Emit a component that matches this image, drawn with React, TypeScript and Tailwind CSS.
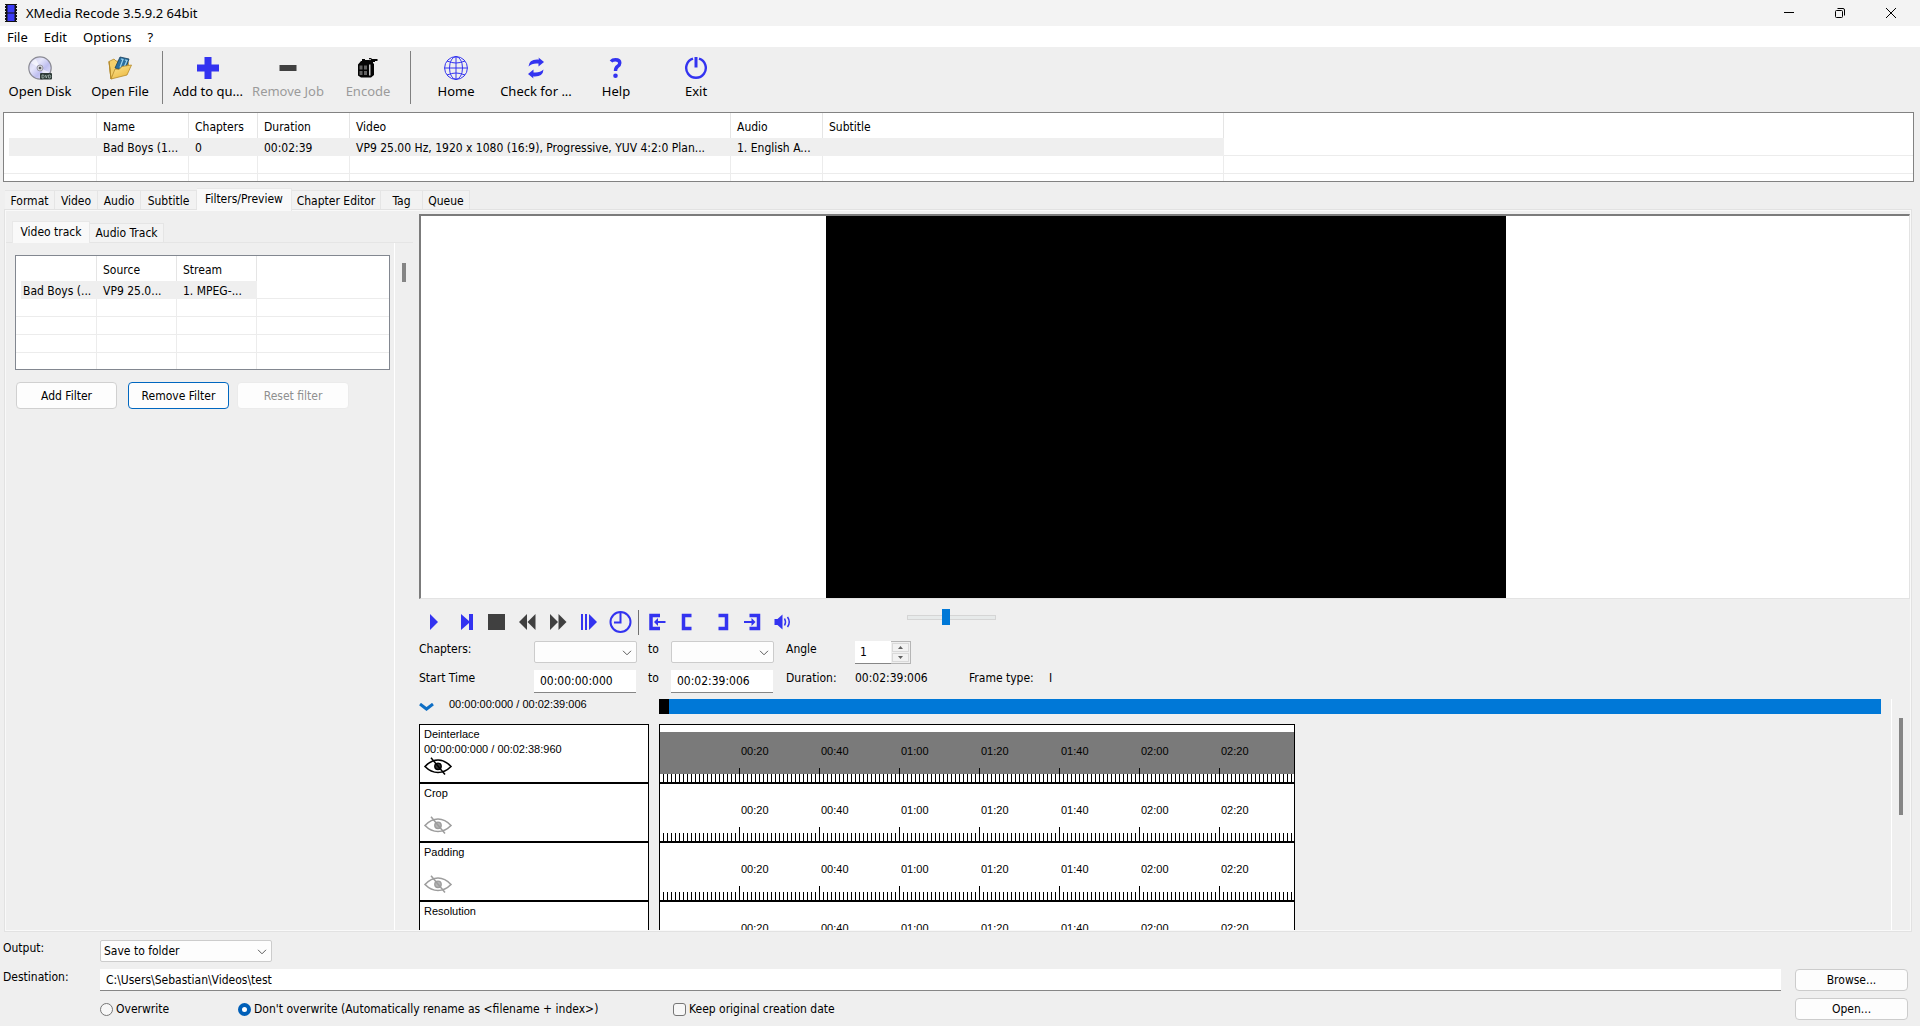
import { useState } from 'react';
import type { ReactNode } from 'react';
import clsx from 'clsx';

const BLUE = '#3333f0';
const DARK = '#404040';

/* ---------- icons ---------- */

function FilmIcon() {
  return (
    <svg width="12" height="18" viewBox="0 0 12 18" aria-hidden="true">
      <rect width="12" height="18" fill="#111" />
      <rect x="2.5" y="1" width="7" height="7.5" fill="#3a3af5" />
      <rect x="2.5" y="9.5" width="7" height="7.5" fill="#3a3af5" />
      {[1, 4, 7, 10, 13, 16].map((y) => (
        <g key={y} fill="#ddd">
          <rect x="0" y={y} width="1" height="1" />
          <rect x="11" y={y} width="1" height="1" />
        </g>
      ))}
    </svg>
  );
}

function DiscIcon() {
  return (
    <svg width="24" height="24" viewBox="0 0 24 24" aria-hidden="true">
      <defs>
        <linearGradient id="disc" x1="0" y1="0" x2="1" y2="1">
          <stop offset="0" stopColor="#c4c4e6" />
          <stop offset="0.35" stopColor="#e6e6fb" />
          <stop offset="0.6" stopColor="#bfbff0" />
          <stop offset="1" stopColor="#f2f2ff" />
        </linearGradient>
      </defs>
      <circle cx="12" cy="12" r="11.2" fill="url(#disc)" stroke="#8b8b94" strokeWidth="1.2" />
      <path d="M12 12 3 7a10 10 0 0 1 5-4zM12 12l9 4a10 10 0 0 1-4 5z" fill="#fff" opacity="0.6" />
      <circle cx="12" cy="12" r="3" fill="#d6d6dc" stroke="#9a9aa5" />
      <circle cx="12" cy="12" r="1.3" fill="#555" />
      <rect x="12" y="17" width="12" height="6.5" rx="1" fill="#2e3b38" />
      <path d="M14 19v3h1.2q1-.2 1-1.5t-1-1.5zM17.3 19l1 3 1-3M20.6 19v3h1.2q.9-.2.9-1.5t-.9-1.5z" fill="none" stroke="#b9cbc4" strokeWidth="0.7" />
    </svg>
  );
}

function FolderIcon() {
  return (
    <svg width="24" height="24" viewBox="0 0 24 24" aria-hidden="true">
      <defs>
        <linearGradient id="folder" x1="0" y1="0" x2="0.6" y2="1">
          <stop offset="0" stopColor="#fff0a8" />
          <stop offset="1" stopColor="#eebc45" />
        </linearGradient>
      </defs>
      <path d="M1 5.5 6 3l2 2 12 1 1 5-18 12z" fill="#f3cf6a" stroke="#b58a2a" strokeWidth="0.8" />
      <path d="m12 1 9 2-4 12-10-3z" fill="#2b6f9e" stroke="#143c5a" strokeWidth="0.8" />
      <path d="m13 3 2 .5-3 8M17 4l2 .5-3 7" fill="none" stroke="#9fd6f2" strokeWidth="1.2" />
      <path d="M1 5.5 3 23l4-10 4 .5 3-3L23.5 9 19 19 3 23z" fill="url(#folder)" stroke="#b58a2a" strokeWidth="0.8" />
    </svg>
  );
}

function PlusIcon() {
  return (
    <svg width="24" height="24" viewBox="0 0 24 24" fill={BLUE} aria-hidden="true">
      <path d="M8.5 1h7v7.500h7.500v7h-7.500V23h-7v-7.500H1v-7h7.500z" />
    </svg>
  );
}

function MinusIcon() {
  return (
    <svg width="24" height="24" viewBox="0 0 24 24" fill={DARK} aria-hidden="true">
      <rect x="3.500" y="9" width="17" height="6" />
    </svg>
  );
}

function EncodeIcon() {
  return (
    <svg width="24" height="24" viewBox="0 0 24 24" aria-hidden="true">
      <path d="M2 8.500 5 5h1V3h3v1h4V2h2l1 1h5.500v2H19v1h-2v1l1 1v11l-3 2.500H5L2 19.500z" fill="#050505" />
      <path d="M3.500 9.500h3v4h-3zM8 9.500h3v4H8zM3.500 15h3v4h-3zM8 15h3v4H8z" fill="#626262" />
      <path d="M13 8.500h1.500v11H13z" fill="#c8c8c8" />
      <circle cx="14" cy="3.500" r="0.800" fill="#efefef" />
    </svg>
  );
}

function HomeIcon() {
  return (
    <svg width="24" height="24" viewBox="0 0 24 24" fill="none" stroke={BLUE} strokeWidth="1" aria-hidden="true">
      <circle cx="12" cy="12" r="11.400" />
      <ellipse cx="12" cy="12" rx="6.500" ry="11.400" />
      <path d="M12 .5v23M.5 12h23M3 5q9 4 18 0M3 19q9-4 18 0" />
    </svg>
  );
}

function RefreshIcon() {
  return (
    <svg width="24" height="24" viewBox="0 0 24 24" fill={BLUE} aria-hidden="true">
      <path d="M4.500 10.500q.5-7 8.500-7h2L14.500 1.500 20 6l-5.500 4.500v-3h-2Q7.500 7.500 4.500 10.500z" />
      <path d="M19.500 13.500q-.5 7-8.500 7H9l.5 2L4 18l5.500-4.500v3h2q5 0 8-3z" />
    </svg>
  );
}

function HelpIcon() {
  return (
    <svg width="24" height="24" viewBox="0 0 24 24" fill="none" stroke={BLUE} aria-hidden="true">
      <path d="M7 5.500Q8.500 3.700 11.500 3.700q4.300 0 4.300 3.300 0 2-2.300 3.500-2 1.400-2 4.500" strokeWidth="3.400" />
      <circle cx="11.500" cy="19.800" r="1.200" strokeWidth="2.200" />
    </svg>
  );
}

function PowerIcon() {
  return (
    <svg width="24" height="24" viewBox="0 0 24 24" fill="none" stroke={BLUE} strokeWidth="2.400" aria-hidden="true">
      <path d="M9 2.600a9.800 9.800 0 1 0 6 0" />
      <path d="M12 1v10.500" strokeWidth="3" />
    </svg>
  );
}

function EyeOffIcon({ active }: { active: boolean }) {
  return (
    <svg width="28" height="18" viewBox="0 0 28 18" fill="none" stroke={active ? '#000' : '#9d9d9d'} aria-hidden="true">
      <path d="M1 9.500Q7 3 14 3t13 6.500Q21 15.500 14 15.500T1 9.500z" strokeWidth="1.600" />
      <circle cx="14" cy="9.300" r="3.200" fill={active ? '#333' : '#b5b5b5'} strokeWidth="1.400" />
      <path d="M7 .8 21 17.500" strokeWidth="1.500" />
    </svg>
  );
}

function Chevron({ className }: { className?: string }) {
  return (
    <svg width="10" height="6" viewBox="0 0 10 6" fill="none" stroke="#5c5c5c" className={className} aria-hidden="true">
      <path d="m1 .8 4 4 4-4" />
    </svg>
  );
}

const PLAYER_ICONS: Record<string, ReactNode> = {
  Play: <path d="M7 4v16l8-8z" fill={BLUE} />,
  Next: <path d="M7 4v16l8-7V20h4V4h-4v7z" fill={BLUE} />,
  Stop: <rect x="3" y="4" width="17" height="16" fill={DARK} />,
  Rewind: <path d="M11 4v16l-8-8zM19.500 4v16l-8-8z" fill={DARK} />,
  Forward: <path d="M3 4v16l8-8zM11.500 4v16l8-8z" fill={DARK} />,
  'Frame step': <path d="M3 4h2v16H3zM7 4h2v16H7zM11 4v16l8-8z" fill={BLUE} />,
  Time: (
    <g fill="none" stroke={BLUE} strokeWidth="2">
      <circle cx="11.500" cy="12" r="10" />
      <path d="M11.500 3v9.500H5" />
    </g>
  ),
  'Go to start': (
    <g fill="none" stroke={BLUE}>
      <path d="M15 5.500H6v13h9" strokeWidth="3.500" />
      <path d="M20.500 12H11" strokeWidth="2" />
      <path d="m13 8-4 4 4 4z" fill={BLUE} stroke="none" />
    </g>
  ),
  'Mark start': <path d="M15.500 5.500H7.500v13h8" fill="none" stroke={BLUE} strokeWidth="3.500" />,
  'Mark end': <path d="M11.500 5.500h8v13h-8" fill="none" stroke={BLUE} strokeWidth="3.500" />,
  'Go to end': (
    <g fill="none" stroke={BLUE}>
      <path d="M11.500 5.500h9v13h-9" strokeWidth="3.500" />
      <path d="M6 12h9" strokeWidth="2" />
      <path d="m13.500 8 4 4-4 4z" fill={BLUE} stroke="none" />
    </g>
  ),
  Volume: (
    <g>
      <path d="M5.500 9h3l5-4.500v15L8.500 15h-3z" fill={BLUE} />
      <path d="M15.500 8.500q2 3.500 0 7M18.500 7q3.500 5 0 10" fill="none" stroke={BLUE} strokeWidth="1.500" />
    </g>
  ),
};

/* ---------- data ---------- */

const JOB_COLUMNS = [
  { title: '', value: '', width: 93 },
  { title: 'Name', value: 'Bad Boys (1...', width: 92 },
  { title: 'Chapters', value: '0', width: 69 },
  { title: 'Duration', value: '00:02:39', width: 92 },
  { title: 'Video', value: 'VP9 25.00 Hz, 1920 x 1080 (16:9), Progressive, YUV 4:2:0 Plan...', width: 381 },
  { title: 'Audio', value: '1. English A...', width: 92 },
  { title: 'Subtitle', value: '', width: 401 },
];

const SOURCE_COLUMNS = [
  { title: '', value: 'Bad Boys (...', width: 81 },
  { title: 'Source', value: 'VP9 25.0...', width: 80 },
  { title: 'Stream', value: '1. MPEG-...', width: 80 },
];

const TABS = [
  { name: 'Format', width: 'w-[50px]' },
  { name: 'Video', width: 'w-[43px]' },
  { name: 'Audio', width: 'w-[43px]' },
  { name: 'Subtitle', width: 'w-[56px]' },
  { name: 'Filters/Preview', width: 'w-[95px]' },
  { name: 'Chapter Editor', width: 'w-[89px]' },
  { name: 'Tag', width: 'w-[42px]' },
  { name: 'Queue', width: 'w-[47px]' },
];

const TRACKS = [
  { name: 'Deinterlace', range: '00:00:00:000 / 00:02:38:960', active: true },
  { name: 'Crop', range: '', active: false },
  { name: 'Padding', range: '', active: false },
  { name: 'Resolution', range: '', active: false },
];

const TIMES = ['00:20', '00:40', '01:00', '01:20', '01:40', '02:00', '02:20'];
const TICKS = Array.from({ length: 158 }, (_, i) => i + 1);

/* ---------- parts ---------- */

function ToolButton({ icon, label, disabled }: { icon: ReactNode; label: string; disabled?: boolean }) {
  return (
    <button type="button" disabled={disabled} className="flex w-20 shrink-0 flex-col items-center gap-[3px] whitespace-nowrap pt-[9px] disabled:text-[#9b9b9b]">
      {icon}
      <span className="leading-4">{label}</span>
    </button>
  );
}

function ListTable({ columns, emptyRows }: { columns: typeof JOB_COLUMNS; emptyRows: number }) {
  return (
    <table className="w-full table-fixed border-separate border-spacing-0 text-left">
      <colgroup>
        {columns.map((c, i) => (
          <col key={i} style={{ width: c.width }} />
        ))}
        <col />
      </colgroup>
      <thead>
        <tr className="h-[25px]">
          {columns.map((c, i) => (
            <th key={i} className="border-r border-[#e5e5e5] px-[6px] pt-[2px] font-normal leading-4">{c.title}</th>
          ))}
          <th />
        </tr>
      </thead>
      <tbody>
        <tr className="h-[18px]">
          {columns.map((c, i) => (
            <td
              key={i}
              className={clsx('overflow-hidden whitespace-nowrap bg-[#efefef] pt-px leading-4', i === 0 ? 'border-l-[5px] border-white pl-[2px]' : 'px-[6px]')}
            >
              {c.value}
            </td>
          ))}
          <td className="border-b border-[#ececec]" />
        </tr>
        {Array.from({ length: emptyRows }, (_, r) => (
          <tr key={r} className="h-[18px]">
            {columns.map((_c, i) => (
              <td key={i} className="border-b border-r border-[#ececec]" />
            ))}
            <td className="border-b border-[#ececec]" />
          </tr>
        ))}
        <tr className="h-[18px]">
          {columns.map((_c, i) => (
            <td key={i} className="border-r border-[#ececec]" />
          ))}
          <td />
        </tr>
      </tbody>
    </table>
  );
}

function Select({ label, options, className }: { label: string; options: string[]; className?: string }) {
  return (
    <div className={clsx('relative', className)}>
      <select aria-label={label} className="block h-[22px] w-full appearance-none rounded-xs border border-[#cccccc] bg-[#fdfdfd] pl-[3px] leading-4">
        {options.map((o) => (
          <option key={o}>{o}</option>
        ))}
      </select>
      <Chevron className="pointer-events-none absolute right-[5px] top-[9px]" />
    </div>
  );
}

function PlayerButton({ name }: { name: string }) {
  return (
    <button type="button" aria-label={name} className="flex w-[31px] shrink-0 justify-center">
      <svg width="24" height="24" viewBox="0 0 24 24" aria-hidden="true">{PLAYER_ICONS[name]}</svg>
    </button>
  );
}

function Ruler() {
  return (
    <svg className="relative -mt-[6px] block h-[14px] w-full" aria-hidden="true">
      {TICKS.map((t) => (
        <rect key={t} x={t * 4 - 1} y={t % 20 === 0 ? 0 : 6} width="1" height="14" fill="#000" />
      ))}
    </svg>
  );
}

function TrackRow({ track }: { track: (typeof TRACKS)[number] }) {
  return (
    <>
      <div className="h-[59px] border border-black bg-white px-1 pt-[2px] leading-[15px]">
        <div>{track.name}</div>
        <div className="h-[15px]">{track.range}</div>
        <button type="button" aria-label={`Toggle ${track.name}`} className="block">
          <EyeOffIcon active={track.active} />
        </button>
      </div>
      <div className="h-[59px] w-[636px] overflow-hidden border border-black bg-white pt-[7px]">
        <div className={clsx('flex h-[42px] overflow-hidden pl-[81px] pt-[11px] leading-4', track.active && 'bg-[#7a7a7a]')}>
          {TIMES.map((t) => (
            <span key={t} className="w-20 shrink-0">{t}</span>
          ))}
        </div>
        <Ruler />
      </div>
    </>
  );
}

function FilterSidebar() {
  const button = 'h-[27px] rounded border bg-[#fdfdfd] leading-4';
  return (
    <aside className="flex w-[413px] shrink-0 flex-col pt-[10px]">
      <div className="mr-[6px] flex items-end border-b border-[#e5e5e5] pl-[6px]">
        <button type="button" className="-mb-px h-[22px] w-[78px] border border-b-0 border-[#e8e8e8] bg-[#f9f9f9] pb-[2px] leading-4">Video track</button>
        <button type="button" className="h-[19px] w-[74px] border border-b-0 border-l-0 border-[#e5e5e5] bg-[#f3f3f3] leading-4">Audio Track</button>
      </div>
      <div className="flex flex-1">
        <div className="w-[389px] border-r border-white pl-[9px] pt-3">
          <div className="h-[115px] w-[375px] overflow-hidden border border-[#828790] bg-white">
            <ListTable columns={SOURCE_COLUMNS} emptyRows={3} />
          </div>
          <div className="mt-3 flex pl-px">
            <button type="button" className={clsx(button, 'mr-[11px] w-[101px] border-[#d0d0d0]')}>Add Filter</button>
            <button type="button" className={clsx(button, 'mr-2 w-[101px] border-[#0067c0]')}>Remove Filter</button>
            <button type="button" disabled className={clsx(button, 'w-28 border-[#ebebeb] bg-[#f6f6f6] text-[#8f8f8f]')}>Reset filter</button>
          </div>
        </div>
        <div className="mt-5 ml-[7px] h-[19px] w-1 bg-[#858585]" />
      </div>
    </aside>
  );
}

function PlayerPanel() {
  const field = 'h-[23px] w-[102px] border-b border-[#868686] bg-white px-[6px] leading-4';
  return (
    <section className="flex min-w-0 flex-1 flex-col pt-[3px]">
      <div className="flex h-[385px] shrink-0 justify-center border-2 border-b border-r border-[#e3e3e3] border-t-[#7b7b7b] border-l-[#7b7b7b] bg-white pl-[2px]">
        <div className="aspect-video h-full bg-black" />
      </div>

      <div className="flex h-[42px] items-center pt-1">
        {['Play', 'Next', 'Stop', 'Rewind', 'Forward', 'Frame step', 'Time'].map((n) => (
          <PlayerButton key={n} name={n} />
        ))}
        <div className="mx-[2px] h-[25px] w-px bg-[#707070]" />
        {['Go to start', 'Mark start', 'Mark end', 'Go to end', 'Volume'].map((n) => (
          <PlayerButton key={n} name={n} />
        ))}
        <input
          type="range"
          aria-label="Volume level"
          defaultValue={43}
          className="mt-[6px] ml-[111px] h-4 w-[89px] appearance-none self-start bg-transparent [&::-webkit-slider-runnable-track]:h-[5px] [&::-webkit-slider-runnable-track]:border [&::-webkit-slider-runnable-track]:border-[#d5d5d5] [&::-webkit-slider-runnable-track]:bg-[#e7eaea] [&::-webkit-slider-thumb]:-mt-[7px] [&::-webkit-slider-thumb]:h-4 [&::-webkit-slider-thumb]:w-2 [&::-webkit-slider-thumb]:appearance-none [&::-webkit-slider-thumb]:bg-[#0078d7]"
        />
      </div>

      <div className="grid grid-cols-[115px_114px_23px_115px_69px_114px_80px_auto] items-start gap-y-[6px] leading-4">
        <span>Chapters:</span>
        <Select label="First chapter" options={['']} className="w-[103px]" />
        <span>to</span>
        <Select label="Last chapter" options={['']} className="w-[103px]" />
        <label htmlFor="angle">Angle</label>
        <div className="flex h-[23px] w-14">
          <input id="angle" defaultValue="1" className="w-9 border-b border-[#868686] bg-white pl-[5px]" />
          <div className="flex w-5 flex-col gap-px border border-l-0 border-[#b5b5b5] p-px">
            <button type="button" aria-label="Increase angle" className="flex flex-1 items-center justify-center border border-[#d9d9d9] bg-[#f2f2f2]">
              <svg width="5" height="3" viewBox="0 0 5 3" aria-hidden="true"><path d="M0 3 2.500 0 5 3z" fill="#606060" /></svg>
            </button>
            <button type="button" aria-label="Decrease angle" className="flex flex-1 items-center justify-center border border-[#d9d9d9] bg-[#f2f2f2]">
              <svg width="5" height="3" viewBox="0 0 5 3" aria-hidden="true"><path d="M0 0h5L2.500 3z" fill="#606060" /></svg>
            </button>
          </div>
        </div>
        <span />
        <span />

        <label htmlFor="start">Start Time</label>
        <input id="start" defaultValue="00:00:00:000" className={field} />
        <label htmlFor="end">to</label>
        <input id="end" defaultValue="00:02:39:006" className={field} />
        <span>Duration:</span>
        <span>00:02:39:006</span>
        <span>Frame type:</span>
        <span>I</span>
      </div>

      <div className="mt-[6px] flex min-h-0 flex-1 font-['Liberation_Sans',Arial,sans-serif] text-[11px]">
        <div className="min-w-0 flex-1 overflow-hidden pr-[10px]">
          <div className="grid grid-cols-[230px_1fr] gap-x-[10px]">
            <div className="flex h-[25px] items-start leading-[11px]">
              <button type="button" aria-label="Collapse tracks" className="mt-1 mr-[15px]">
                <svg width="15" height="8" viewBox="0 0 15 8" fill="none" stroke="#0f6fc5" strokeWidth="3" aria-hidden="true">
                  <path d="m1 1 6.500 5L14 1" />
                </svg>
              </button>
              {'00:00:00:000 / 00:02:39:006'}
            </div>
            <div className="h-[15px] bg-[#0078d7]">
              <div className="h-full w-[10px] bg-black" />
            </div>
            {TRACKS.map((t) => (
              <TrackRow key={t.name} track={t} />
            ))}
          </div>
        </div>
        <div className="w-[19px] border-l border-white pl-[7px] pt-[19px]">
          <div className="h-[97px] w-1 bg-[#858585]" />
        </div>
      </div>
    </section>
  );
}

function OutputForm() {
  const button = 'h-[22px] w-[113px] shrink-0 rounded border border-[#cccccc] bg-[#fdfdfd] leading-4';
  const [overwrite, setOverwrite] = useState(false);
  const radio = 'h-[13px] w-[13px] shrink-0 appearance-none rounded-full border border-[#767676] bg-[#f7f7f7] checked:border-4 checked:border-[#005fb8] checked:bg-white';
  return (
    <form className="flex flex-col gap-[7px] pt-2 pr-3 pb-[6px] pl-[3px]">
      <div className="flex h-[22px] items-start leading-4">
        <span className="w-[97px] shrink-0">Output:</span>
        <Select label="Output" options={['Save to folder']} className="w-[172px]" />
      </div>
      <div className="flex h-[22px] items-start leading-4">
        <label htmlFor="destination" className="w-[97px] shrink-0">Destination:</label>
        <input id="destination" defaultValue="C:\Users\Sebastian\Videos\test" className="mr-[14px] h-[22px] min-w-0 flex-1 border-b border-[#868686] bg-white px-[6px]" />
        <button type="button" className={button}>Browse...</button>
      </div>
      <div className="flex h-[22px] items-center pl-[97px] leading-4">
        <label className="flex w-[138px] items-center gap-[3px]">
          <input type="radio" name="mode" className={radio} checked={overwrite} onChange={() => setOverwrite(true)} />
          Overwrite
        </label>
        <label className="flex w-[435px] items-center gap-[3px]">
          <input type="radio" name="mode" className={radio} checked={!overwrite} onChange={() => setOverwrite(false)} />
          {"Don't overwrite (Automatically rename as <filename + index>)"}
        </label>
        <label className="flex flex-1 items-center gap-[3px]">
          <input type="checkbox" className="h-[13px] w-[13px] appearance-none rounded-[3px] border border-[#767676] bg-[#f7f7f7] checked:bg-[#005fb8]" />
          Keep original creation date
        </label>
        <button type="button" className={button}>Open...</button>
      </div>
    </form>
  );
}

export default function App() {
  const [tab, setTab] = useState('Filters/Preview');

  return (
    <div className="flex h-screen flex-col overflow-hidden bg-[#efefef] font-['DejaVu_Sans_Condensed','DejaVu_Sans',sans-serif] text-xs text-black">
      <header className="font-['Noto_Sans',sans-serif] text-[13px]">
        <div className="flex h-[26px] items-center bg-[#f3f3f3] pl-[5px] pr-1">
          <FilmIcon />
          <h1 className="ml-[9px] flex-1 leading-4">XMedia Recode 3.5.9.2 64bit</h1>
          <button type="button" aria-label="Minimize" className="flex w-[51px] justify-center">
            <svg width="10" height="10" viewBox="0 0 10 10" aria-hidden="true"><path d="M0 4h10v1H0z" /></svg>
          </button>
          <button type="button" aria-label="Restore" className="flex w-[51px] justify-center">
            <svg width="10" height="10" viewBox="0 0 10 10" fill="none" stroke="#000" aria-hidden="true">
              <rect x="0.500" y="2.500" width="7" height="7" rx="1" />
              <path d="M2.500.5H8q1.500 0 1.500 1.500v5.500" />
            </svg>
          </button>
          <button type="button" aria-label="Close" className="flex w-[51px] justify-center">
            <svg width="10" height="10" viewBox="0 0 10 10" stroke="#000" aria-hidden="true"><path d="m0 0 10 10M10 0 0 10" /></svg>
          </button>
        </div>
        <nav className="flex h-[21px] items-center gap-4 bg-white pl-[7px] leading-4">
          <button type="button">File</button>
          <button type="button">Edit</button>
          <button type="button">Options</button>
          <button type="button">?</button>
        </nav>
        <div className="flex h-[65px] items-start">
          <ToolButton icon={<DiscIcon />} label="Open Disk" />
          <ToolButton icon={<FolderIcon />} label="Open File" />
          <div className="mt-1 mr-[5px] ml-[2px] h-[53px] w-px bg-[#808080]" />
          <ToolButton icon={<PlusIcon />} label="Add to qu..." />
          <ToolButton icon={<MinusIcon />} label="Remove Job" disabled />
          <ToolButton icon={<EncodeIcon />} label="Encode" disabled />
          <div className="mt-1 mr-[5px] ml-[2px] h-[53px] w-px bg-[#808080]" />
          <ToolButton icon={<HomeIcon />} label="Home" />
          <ToolButton icon={<RefreshIcon />} label="Check for ..." />
          <ToolButton icon={<HelpIcon />} label="Help" />
          <ToolButton icon={<PowerIcon />} label="Exit" />
        </div>
      </header>

      <div className="mr-[6px] ml-[3px] h-[70px] shrink-0 overflow-hidden border border-[#828282] bg-white">
        <ListTable columns={JOB_COLUMNS} emptyRows={1} />
      </div>

      <div className="mt-[6px] flex h-[21px] shrink-0 items-end pl-[5px]">
        {TABS.map((t) => (
          <button
            key={t.name}
            type="button"
            onClick={() => setTab(t.name)}
            className={clsx(
              'shrink-0 whitespace-nowrap border border-b-0 border-l-0 leading-4',
              t.width,
              t.name === tab ? 'relative -mb-[2px] h-[23px] border-[#e8e8e8] bg-[#f9f9f9] pb-[3px]' : 'h-[19px] border-[#e5e5e5] bg-[#f2f2f2] pt-px',
            )}
          >
            {t.name}
          </button>
        ))}
      </div>

      <main className="mr-2 ml-1 flex min-h-0 flex-1 border border-[#e2e2e2]">
        <div className="flex min-w-0 flex-1 border border-[#f9f9f9]">
          <FilterSidebar />
          <PlayerPanel />
        </div>
      </main>

      <OutputForm />
    </div>
  );
}
